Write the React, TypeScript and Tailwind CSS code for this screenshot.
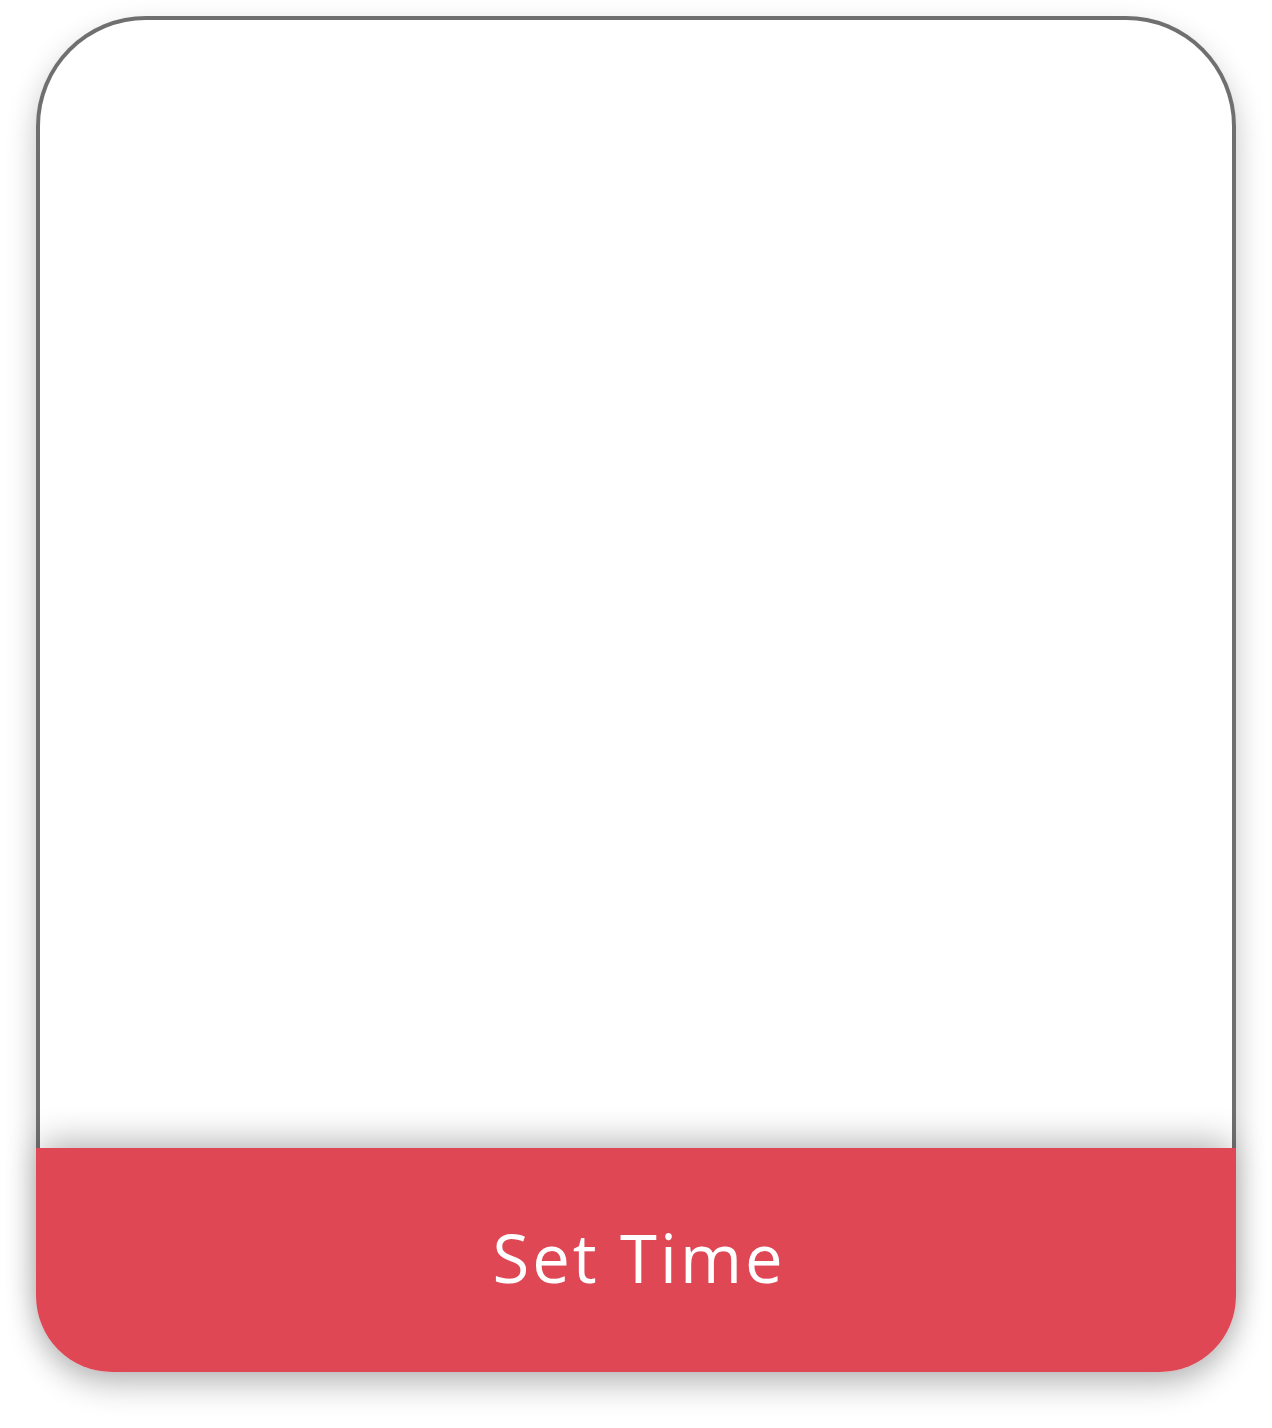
import React from "react";

export default function App() {
  return (
    <div className="w-[1272px] h-[1428px] bg-white pt-[16px] pl-[36px]">
      <div className="w-[1200px] h-[1356px] flex flex-col rounded-t-[110px] rounded-b-[76px] shadow-[0_14px_30px_rgba(0,0,0,0.24)] bg-white">
        <div className="flex-1 border-4 border-b-0 border-[#6f6f6f] rounded-t-[110px] bg-white" />
        <button
          className="h-[224px] w-full bg-[#df4755] rounded-b-[76px] text-white text-[67px] tracking-[3px] pl-[6px] flex items-center justify-center shadow-[0_-12px_34px_-6px_rgba(0,0,0,0.3)] relative"
          style={{ fontFamily: '"Open Sans", sans-serif' }}
        >
          <span className="-mt-[6px]">Set Time</span>
        </button>
      </div>
    </div>
  );
}
